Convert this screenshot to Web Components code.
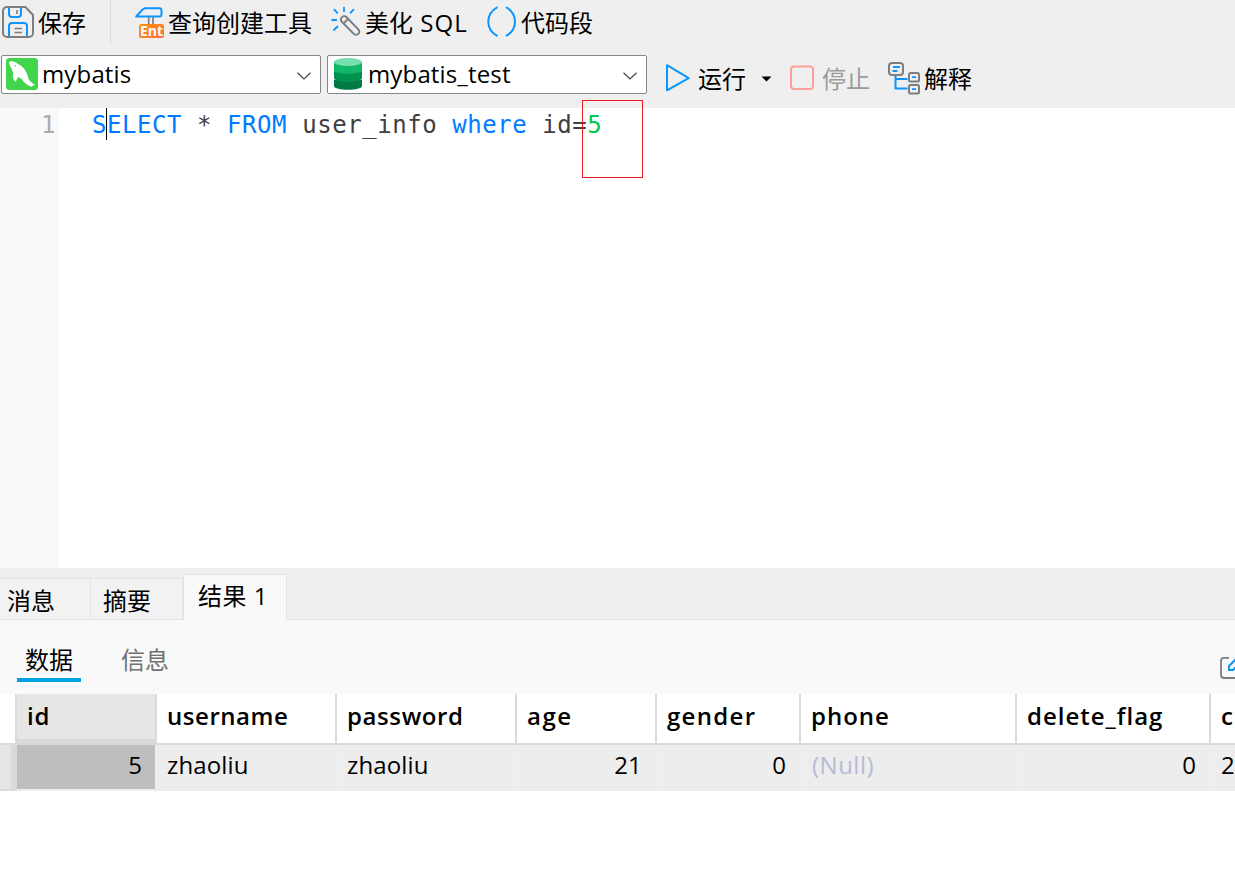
<!DOCTYPE html>
<html lang="zh-CN">
<head>
<meta charset="utf-8">
<title>mybatis_test</title>
<style>
	html, body {
		margin: 0;
		height: 100%;
		overflow: hidden;
		background: #fff;
		font-family: "Open Sans", "Noto Sans CJK SC", sans-serif;
		font-size: 24px;
		color: #000;
	}
</style>
</head>
<body>
<query-window></query-window>

<script>
const icons = {
	save: {width: 34, height: 40, body: `
		<path d="M6 8H24.500L32 16V34a4 4 0 0 1-4 4H6a4 4 0 0 1-4-4V12a4 4 0 0 1 4-4z" fill="none" stroke="#7e7e7e" stroke-width="2"/>
		<path d="M8 9v6a3 3 0 0 0 3 3h6a3 3 0 0 0 3-3V9M8 37V27a3 3 0 0 1 3-3H23a3 3 0 0 1 3 3v10" fill="none" stroke="#0a96ff" stroke-width="2"/>
		<path d="M16 11v4M13.500 29.500h7.500M13.500 33.500h7.500" stroke="#7e7e7e" stroke-width="1.600"/>`},
	builder: {width: 32, height: 40, body: `
		<path d="M1.200 17.500L7.200 11a5 5 0 0 1 3-1.800H24.500a2 2 0 0 1 2 2v4.300a2 2 0 0 1-2 2z" fill="none" stroke="#0a96ff" stroke-width="2" stroke-linejoin="round"/>
		<path d="M13.700 18v8M18 18v8" stroke="#7e7e7e" stroke-width="1.700"/>
		<defs><linearGradient id="g" x1="0" y1="0" x2="1" y2="1"><stop offset="0" stop-color="#ff9100"/><stop offset="1" stop-color="#ff7048"/></linearGradient></defs>
		<rect x="4" y="25" width="25" height="14" rx="2.500" fill="url(#g)"/>
		<text x="16.500" y="37" text-anchor="middle" textLength="23" lengthAdjust="spacingAndGlyphs" font-family="Open Sans" font-weight="700" font-size="14" fill="#fff">Ent</text>`},
	wand: {width: 32, height: 40, body: `
		<path d="M13 8v5M2.800 10.200l4 4.200M23 10.200l-4 4.200M0.500 21h5.500M2.500 31.500l4.500-4.500" stroke="#0a96ff" stroke-width="1.800"/>
		<path d="M10.800 22.800a3.200 3.200 0 0 1 4.800-4.600L27.300 30.400a3.100 3.100 0 0 1-4.500 4.500z M12.500 24.600l4.600-4.800" fill="none" stroke="#7e7e7e" stroke-width="2"/>`},
	snippet: {width: 30, height: 40, body: `
		<path d="M10.500 8.200C-1.800 15-1.800 30.500 10.500 37M19 8.200C31 15 31 30.500 19 37" fill="none" stroke="#0a96ff" stroke-width="2"/>`},
	run: {width: 27, height: 32, body: `
		<path d="M3 3.800v24.500L24.700 16.200L3 3.200z" fill="none" stroke="#0a96ff" stroke-width="2" stroke-linejoin="round"/>`},
	caret: {width: 12, height: 8, body: `<path d="M0.500 1.500h10L5.500 6.500z"/>`},
	stop: {width: 26, height: 26, body: `<rect x="2" y="1.500" width="22" height="22.500" rx="3" fill="none" stroke="#ff9f98" stroke-width="2"/>`},
	explain: {width: 34, height: 34, body: `
		<path d="M7.500 15v12.500h12M7.500 18h12" fill="none" stroke="#0a96ff" stroke-width="2"/>
		<g fill="none" stroke="#7e7e7e" stroke-width="2">
			<rect x="1" y="2" width="14" height="12" rx="3"/>
			<rect x="21" y="12" width="10" height="8.500" rx="1.500"/>
			<rect x="21" y="24" width="10" height="8.500" rx="1.500"/>
		</g>
		<path d="M5 6h7M4.500 10h5M24 16.200h4M24 28.200h4" stroke="#0a96ff" stroke-width="1.800"/>`},
	mysql: {width: 32, height: 32, body: `
		<rect width="32" height="32" rx="3.500" fill="#42d44a"/>
		<path d="M3 4.500C4 2.300 9 3 12 6c5 2.500 9.300 7.500 10.300 14.500c1 2.600 3.200 3.500 6.700 6.700c-1.500 0-2.500.200-3.200 1.600c-3-.600-7-3-10-7.600c-1.500-1.500-3-2-4-1.400c-1 1-1 2.600-2.300 4.200c-2-2.200-3.300-4.500-2.500-8c.300-1.600-.800-3.300-1.500-5.500C4.800 8.800 3 7 3 4.500z" fill="#fff"/>
		<circle cx="9.300" cy="7.800" r="0.700" fill="#42d44a"/>`},
	database: {width: 28, height: 32, body: `
		<path d="M0 22v6c0 5 28 5 28 0v-6z" fill="#007a45"/>
		<path d="M0 13v7c0 5 28 5 28 0v-7z" fill="#00924f"/>
		<path d="M0 4v8c0 5 28 5 28 0V4z" fill="#12b76a"/>
		<ellipse cx="14" cy="4" rx="14" ry="4" fill="#76dfaf"/>`},
	chevron: {width: 14, height: 8, body: `<path d="M0.500 0.800L7 7L13.500 0.800" fill="none" stroke="#444" stroke-width="1.200"/>`},
	edit: {width: 24, height: 24, body: `
		<path d="M9 1.800H4a3 3 0 0 0-3 3V19a3 3 0 0 0 3 3h16" fill="none" stroke="#7e7e7e" stroke-width="1.800"/>
		<path d="M9 14v-4L16.500 2.500L20.500 6.500L13 14z" fill="none" stroke="#0a96ff" stroke-width="2"/>`}
};

class UiIcon extends HTMLElement {
	constructor() {
		super();
		this.attachShadow({mode: 'open'});
	}

	connectedCallback() {
		const icon = icons[this.getAttribute('name')];
		this.shadowRoot.innerHTML = `<style>
				:host { display: block; flex: none; }
				svg { display: block; }
			</style>
			<svg width="${icon.width}" height="${icon.height}" viewBox="0 0 ${icon.width} ${icon.height}">${icon.body}</svg>`;
	}
}

class ToolButton extends HTMLElement {
	constructor() {
		super();
		this.attachShadow({mode: 'open'}).innerHTML = `<style>
				:host { display: flex; align-items: center; flex: none; white-space: nowrap; line-height: 36px; }
				:host([disabled]) { color: #9b9b9b; }
				span { margin-left: var(--label-gap, 4px); }
			</style>
			<slot name="icon"></slot>
			<span><slot></slot></span>
			<slot name="after"></slot>`;
	}
}

class ComboBox extends HTMLElement {
	constructor() {
		super();
		this.attachShadow({mode: 'open'}).innerHTML = `<style>
				:host {
					display: flex;
					align-items: center;
					flex: none;
					box-sizing: border-box;
					width: 320px;
					height: 39px;
					padding: 0 9px 0 4px;
					background: #fff;
					border: 1px solid #868686;
					border-radius: 2px;
				}
				span { flex: 1; margin: -2px 0 0 4px; line-height: 36px; letter-spacing: 0.15px; }
				ui-icon[name=chevron] { margin-top: 3px; }
				::slotted(ui-icon) { margin-top: -2px; }
			</style>
			<slot name="icon"></slot>
			<span><slot></slot></span>
			<ui-icon name="chevron"></ui-icon>`;
	}
}

class QueryToolbar extends HTMLElement {
	constructor() {
		super();
		this.attachShadow({mode: 'open'}).innerHTML = `<style>
				:host { display: block; height: 108px; background: #efefef; }
				.row { display: flex; align-items: center; }
				.actions { height: 46px; padding-left: 1px; }
				.actions tool-button { height: 36px; }
				.actions ui-icon { margin-top: -8px; }
				.actions hr { flex: none; width: 1px; height: 45px; margin: 0 24px 0 24px; border: 0; background: #dcdcdc; align-self: flex-start; }
				.targets { align-items: flex-start; padding: 9px 0 0 1px; }
				combo-box + combo-box { margin-left: 6px; }
				.targets tool-button { margin-top: 7px; height: 34px; }
				tool-button ui-icon[name=run], tool-button ui-icon[name=stop] { margin-top: -2px; }
				.latin { letter-spacing: 1.1px; }
			</style>
			<div class="row actions">
				<tool-button style="--label-gap: 3px"><ui-icon slot="icon" name="save"></ui-icon>保存</tool-button>
				<hr>
				<tool-button style="--label-gap: 1px"><ui-icon slot="icon" name="builder"></ui-icon>查询创建工具</tool-button>
				<tool-button style="--label-gap: 2px; margin-left: 19px"><ui-icon slot="icon" name="wand"></ui-icon>美化<span class="latin"> SQL</span></tool-button>
				<tool-button style="--label-gap: 4px; margin-left: 19px"><ui-icon slot="icon" name="snippet"></ui-icon>代码段</tool-button>
			</div>
			<div class="row targets">
				<combo-box><ui-icon slot="icon" name="mysql"></ui-icon>mybatis</combo-box>
				<combo-box><ui-icon slot="icon" name="database" style="margin: -2px 2px 0 2px"></ui-icon>mybatis_test</combo-box>
				<tool-button style="--label-gap: 7px; margin-left: 17px"><ui-icon slot="icon" name="run"></ui-icon>运行<ui-icon slot="after" name="caret" style="margin-left: 15px"></ui-icon></tool-button>
				<tool-button disabled style="--label-gap: 7px; margin-left: 16px"><ui-icon slot="icon" name="stop"></ui-icon>停止</tool-button>
				<tool-button style="--label-gap: 2px; margin-left: 18px"><ui-icon slot="icon" name="explain" style="margin-top: -3px"></ui-icon>解释</tool-button>
			</div>`;
	}
}

class SqlEditor extends HTMLElement {
	constructor() {
		super();
		this.attachShadow({mode: 'open'}).innerHTML = `<style>
				:host {
					display: flex;
					position: relative;
					height: 460px;
					background: #fff;
					font: 24px/32px "DejaVu Sans Mono", monospace;
					letter-spacing: 0.56px;
					color: #404040;
				}
				.gutter { box-sizing: border-box; width: 59px; padding: 1px 3px 0 0; background: #f9f9f9; color: #ababab; text-align: right; }
				.code { padding: 1px 0 0 33px; white-space: pre; }
				.keyword { color: #007bff; }
				.number { color: #00c853; }
				/* Both float over the text */
				.cursor { position: absolute; left: 106px; top: 0; width: 1px; height: 32px; background: #000; }
				.mark { position: absolute; left: 582px; top: -8px; width: 59px; height: 76px; border: 1px solid #ed1c24; }
			</style>
			<div class="gutter">1</div>
			<div class="code"><span class="keyword">SELECT</span> * <span class="keyword">FROM</span> user_info <span class="keyword">where</span> id=<span class="number">5</span></div>
			<div class="cursor"></div>
			<div class="mark"></div>`;
	}
}

class ResultTabs extends HTMLElement {
	constructor() {
		super();
		this.attachShadow({mode: 'open'}).innerHTML = `<style>
				:host { display: flex; align-items: flex-end; height: 52px; background: #efefef; box-shadow: inset 0 -1px #e3e3e3; }
				div { box-sizing: border-box; height: 42px; border: 1px solid #e3e3e3; border-left: 0; background: #f2f2f2; line-height: 43px; white-space: nowrap; }
				.messages { width: 91px; padding-left: 7px; }
				.summary { width: 92px; padding-left: 12px; }
				.result { width: 104px; height: 46px; padding-left: 14px; border-left: 1px solid #e3e3e3; border-bottom: 0; background: #f9f9f9; line-height: 42px; letter-spacing: 0.5px; }
			</style>
			<div class="messages">消息</div>
			<div class="summary">摘要</div>
			<div class="result">结果 1</div>`;
	}
}

class ResultModes extends HTMLElement {
	constructor() {
		super();
		this.attachShadow({mode: 'open'}).innerHTML = `<style>
				:host { display: flex; height: 74px; background: #f9f9f9; overflow: hidden; }
				div { box-sizing: border-box; flex: none; width: 64px; height: 62px; margin-left: 17px; padding: 21px 0 0 8px; line-height: 37px; }
				.active { border-bottom: 4px solid #00a2e8; }
				.info { margin-left: 32px; color: #707070; }
				ui-icon { margin: 36px -9px 0 auto; }
			</style>
			<div class="active">数据</div>
			<div class="info">信息</div>
			<ui-icon name="edit"></ui-icon>`;
	}
}

class DataGrid extends HTMLElement {
	constructor() {
		super();
		this.attachShadow({mode: 'open'});
	}

	connectedCallback() {
		const columns = [
			{name: 'id', value: '5', width: 140, tracking: 0.8, numeric: true, selected: true},
			{name: 'username', value: 'zhaoliu', width: 180, tracking: 0.55},
			{name: 'password', value: 'zhaoliu', width: 180, tracking: 0.6},
			{name: 'age', value: '21', width: 140, tracking: 1.5, numeric: true},
			{name: 'gender', value: '0', width: 144, tracking: 1.3, numeric: true},
			{name: 'phone', value: '(Null)', width: 216, tracking: 1, empty: true},
			{name: 'delete_flag', value: '0', width: 194, tracking: 1, numeric: true},
			{name: 'c', value: '2', width: 30, tracking: 0}
		];

		const cells = function(render) {
			return columns.map(render).join('');
		};

		this.shadowRoot.innerHTML = `<style>
				:host { display: block; overflow: hidden; }
				.row { display: flex; }
				.row > div { box-sizing: border-box; flex: none; white-space: nowrap; }
				.head { height: 51px; border-bottom: 2px solid #dadada; box-sizing: border-box; font-weight: 600; line-height: 43px; }
				.head > div { padding-left: 10px; border-right: 2px solid #dadada; }
				.head .selected { background: #e6e6e6; border-bottom: 4px solid #dadada; }
				.body { height: 46px; background: #ededed; line-height: 40px; }
				.body > div { padding: 0 14px 0 10px; border-right: 1px solid #f1f1f1; letter-spacing: 0.15px; }
				.body .selected { height: 44px; background: #bebebe; border: 0; margin-right: 2px; width: 138px !important; padding-right: 13px; }
				.body .numeric { text-align: right; }
				.body .empty { padding-left: 11px; color: #b4bcd4; letter-spacing: 0.5px; }
				.head .handle { width: 17px; padding: 0; }
				.body .handle { width: 17px; padding: 0; background: #e6e6e6; border-right: 6px solid #dadada; border-bottom: 2px solid #dadada; }
			</style>
			<div class="row head">
				<div class="handle"></div>
				${cells(c => `<div class="${c.selected ? 'selected' : ''}" style="width: ${c.width}px; letter-spacing: ${c.tracking}px">${c.name}</div>`)}
			</div>
			<div class="row body">
				<div class="handle"></div>
				${cells(c => `<div class="${c.selected ? 'selected ' : ''}${c.numeric ? 'numeric' : ''}${c.empty ? 'empty' : ''}" style="width: ${c.width}px">${c.value}</div>`)}
			</div>`;
	}
}

class QueryWindow extends HTMLElement {
	constructor() {
		super();
		this.attachShadow({mode: 'open'}).innerHTML = `<style>
				:host { display: flex; flex-direction: column; height: 100vh; overflow: hidden; }
				:host > * { flex: none; }
			</style>
			<query-toolbar></query-toolbar>
			<sql-editor></sql-editor>
			<result-tabs></result-tabs>
			<result-modes></result-modes>
			<data-grid></data-grid>`;
	}
}

customElements.define('ui-icon', UiIcon);
customElements.define('tool-button', ToolButton);
customElements.define('combo-box', ComboBox);
customElements.define('query-toolbar', QueryToolbar);
customElements.define('sql-editor', SqlEditor);
customElements.define('result-tabs', ResultTabs);
customElements.define('result-modes', ResultModes);
customElements.define('data-grid', DataGrid);
customElements.define('query-window', QueryWindow);
</script>
</body>
</html>
